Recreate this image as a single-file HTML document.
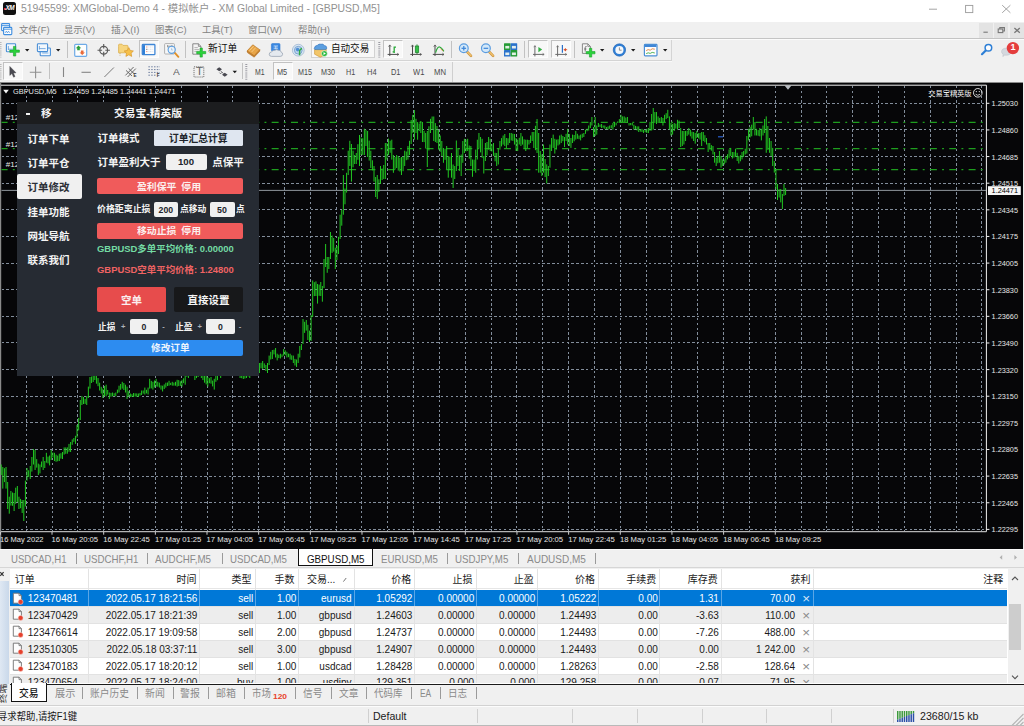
<!DOCTYPE html>
<html lang="zh-CN"><head><meta charset="utf-8"><title>MT4</title>
<style>
*{box-sizing:border-box;margin:0;padding:0}
html,body{width:1024px;height:726px;overflow:hidden;background:#f0f0f0}
body{position:relative;font-family:"Liberation Sans","Noto Sans CJK SC",sans-serif;font-size:10px;color:#222}
.a{position:absolute;white-space:nowrap}
.t{position:absolute;white-space:nowrap;line-height:1;transform-origin:0 50%}
#titlebar{left:0;top:0;width:1024px;height:22px;background:#fff}
#menubar{left:0;top:22px;width:1024px;height:16px;background:#f0f0f0}
.menu{color:#828282;font-size:9.5px;top:25px}
.sep{position:absolute;width:1px;background:#c2c2c2}
.pressed{position:absolute;background:#f8f8f8;border:1px solid #c2c2c2;border-right-color:#fdfdfd;border-bottom-color:#fdfdfd}
.tf{font-size:8.3px;color:#4a4a4a;top:67.8px}
</style></head>
<body>
<div id="titlebar" class="a"></div>
<div class="a" style="left:3.2px;top:2.3px;width:12.9px;height:12.4px;background:#111;border-radius:2.5px"></div>
<div class="a" style="left:4.4px;top:7.6px;width:1.6px;height:2.2px;background:#e0302a"></div><div class="t" style="left:5.6px;top:5.2px;font-size:6.4px;font-weight:bold;font-style:italic;color:#fff;letter-spacing:-0.5px">XM</div>
<div class="t" style="transform:scaleX(1.0096);left:20.5px;top:3.9px;font-size:10.3px;color:#929292">51945599: XMGlobal-Demo 4 - 模拟帐户 - XM Global Limited - [GBPUSD,M5]</div>
<svg class="a" style="left:920px;top:0" width="104" height="22" viewBox="920 0 104 22"><g stroke="#9a9a9a" stroke-width="0.9" fill="none"><path d="M929 9.2H937"/><rect x="965.6" y="5.4" width="7.2" height="7.2"/><path d="M1002.2 5.2L1010.4 12.8M1010.4 5.2L1002.2 12.8"/></g></svg>
<div id="menubar" class="a"></div>
<svg class="a" style="left:0;top:22px" width="14" height="16" viewBox="0 22 14 16"><g fill="#fdfdfd" stroke="#3f8ee0" stroke-width="1.1"><rect x="1.6" y="23.6" width="8" height="7" rx="0.8"/><rect x="3.6" y="27.4" width="8.2" height="7.2" rx="0.8"/></g><path d="M1.6 25.6H9.6M3.6 29.2H11.8" stroke="#3f8ee0" stroke-width="0.9"/><path d="M5.2 32.8l1.1-1.6 1.1 1.6 1.1-1.6 1.1 1.6" stroke="#3f8ee0" stroke-width="0.8" fill="none"/></svg>
<div class="t menu" style="transform:scaleX(0.9794);left:19.2px">文件(F)</div>
<div class="t menu" style="transform:scaleX(0.9788);left:64.3px">显示(V)</div>
<div class="t menu" style="transform:scaleX(1.0190);left:111px">插入(I)</div>
<div class="t menu" style="transform:scaleX(0.9782);left:155px">图表(C)</div>
<div class="t menu" style="transform:scaleX(0.9794);left:201.5px">工具(T)</div>
<div class="t menu" style="transform:scaleX(0.9913);left:248px">窗口(W)</div>
<div class="t menu" style="transform:scaleX(0.9937);left:297.5px">帮助(H)</div>
<div class="a" style="left:979px;top:22.5px;width:13.6px;height:15.2px;background:#e3e3e3"></div>
<div class="a" style="left:994px;top:22.5px;width:14px;height:15.2px;background:#e3e3e3"></div>
<div class="a" style="left:1010px;top:22.5px;width:14px;height:15.2px;background:#e3e3e3"></div>
<svg class="a" style="left:976px;top:22px" width="48" height="16" viewBox="976 22 48 16"><g stroke="#777" stroke-width="1.1" fill="none"><path d="M983.4 32.2H987.8"/><rect x="998.2" y="29" width="4.6" height="3.6"/><path d="M999.8 29V27.6H1004.4V31H1002.8"/><path d="M1014.4 28L1019.8 32.8M1019.8 28L1014.4 32.8" stroke-width="1.3"/></g></svg>
<div class="a" style="left:0;top:37.8px;width:1024px;height:1px;background:#c4c4c4"></div>
<div class="a" style="left:0;top:38.8px;width:1024px;height:1px;background:#fbfbfb"></div>
<div class="pressed" style="left:138.8px;top:40.4px;width:20.5px;height:17.6px"></div>
<div class="pressed" style="left:311.3px;top:40.4px;width:63.3px;height:17.6px;border-color:#d2d2d2"></div>
<div class="pressed" style="left:383.2px;top:40.4px;width:19.8px;height:17.6px"></div>
<div class="pressed" style="left:528.3px;top:40.4px;width:19.6px;height:17.6px"></div>
<div class="pressed" style="left:551.2px;top:40.4px;width:20.1px;height:17.6px"></div>
<div class="pressed" style="left:3px;top:62.4px;width:20.4px;height:17.6px"></div>
<div class="pressed" style="left:272.5px;top:62.4px;width:20.5px;height:17.6px"></div>
<div class="sep" style="left:66.9px;top:41.4px;height:16.2px"></div>
<div class="sep" style="left:184.7px;top:41.4px;height:16.2px"></div>
<div class="sep" style="left:451.3px;top:41.4px;height:16.2px"></div>
<div class="sep" style="left:524.1px;top:41.4px;height:16.2px"></div>
<div class="sep" style="left:573.9px;top:41.4px;height:16.2px"></div>
<div class="sep" style="left:48.8px;top:63.3px;height:16.2px"></div>
<div class="sep" style="left:242.3px;top:63.3px;height:16.2px"></div>
<div class="a" style="left:0;top:59.6px;width:672.4px;height:1px;background:#d4d4d4"></div>
<div class="a" style="left:0;top:60.6px;width:672.4px;height:1px;background:#f9f9f9"></div>
<div class="a" style="left:671.4px;top:40px;width:1px;height:20px;background:#d4d4d4"></div>
<div class="a" style="left:451.8px;top:61.5px;width:1px;height:20.5px;background:#cfcfcf"></div>
<svg class="a" style="left:0;top:39px" width="1024" height="44" viewBox="0 39 1024 44">
<path d="M0.8 42V57.5" stroke="#b4b4b4" stroke-width="1.4" stroke-dasharray="1 1.1"/>
<path d="M0.8 64V80" stroke="#b4b4b4" stroke-width="1.4" stroke-dasharray="1 1.1"/>
<path d="M379.3 42V57.5" stroke="#9c9ca4" stroke-width="2" stroke-dasharray="1 1.1"/>
<path d="M246.3 64V80" stroke="#9c9ca4" stroke-width="2" stroke-dasharray="1 1.1"/>
<rect x="6.4" y="43.8" width="9.2" height="8" rx="0.8" fill="#f2f7fc" stroke="#4a8fd6" stroke-width="1.1"/><path d="M8.4 46V50M8.4 49.2H13" stroke="#4a8fd6" stroke-width="0.7" fill="none"/>
<path d="M13.45 46.400000000000006h2.3v3.65h3.65v2.3h-3.65v3.65h-2.3v-3.65h-3.65v-2.3h3.65z" fill="#2ad43a" stroke="#17a02a" stroke-width="0.6" stroke-linejoin="round"/>
<path d="M25 49.1h4.4l-2.2 2.5z" fill="#1a1a1a"/>
<rect x="40.2" y="48" width="10.2" height="7.8" rx="0.8" fill="#f2f7fc" stroke="#4a8fd6" stroke-width="1.1"/><path d="M42.2 53H48.4" stroke="#4a8fd6" stroke-width="0.7" fill="none"/>
<rect x="37.4" y="43.8" width="10.2" height="7.8" rx="0.8" fill="#f2f7fc" stroke="#4a8fd6" stroke-width="1.1"/><path d="M39.4 46V49.6M39.4 48.6H45.6" stroke="#4a8fd6" stroke-width="0.7" fill="none"/>
<path d="M56 49.1h4.4l-2.2 2.5z" fill="#1a1a1a"/>
<rect x="74.7" y="44.3" width="12" height="12" rx="1" fill="#fdfdfd" stroke="#6eaae6" stroke-width="1.2"/>
<path d="M78.5 45.6l2.7 2.6h-1.4v2h-2.6v-2h-1.4z" fill="#2a9e3a"/><path d="M82.2 55l-2.7-2.6h1.4v-2h2.6v2h1.4z" fill="#ea6b3a"/>
<g stroke="#5a5a5a" fill="none"><circle cx="103.7" cy="50.2" r="3.9" stroke-width="1.2"/><path d="M103.7 44V48.6M103.7 51.8V56.4M97.5 50.2H102.1M105.3 50.2H109.9" stroke-width="1.1"/></g>
<path d="M118.6 46.4V45q0-0.8 0.8-0.8h2.6l1 1.2h4.2q0.8 0 0.8 0.8v6.6h-9.4z" fill="#f7d57e" stroke="#d9a93e" stroke-width="0.7"/>
<path d="M120 53v2.6" stroke="#c9a050" stroke-width="0.8" stroke-dasharray="1 0.8"/>
<path d="M128.8 47.6l1.5 2.9 3.1 0.5-2.3 2.2 0.6 3.2-2.9-1.6-2.9 1.6 0.6-3.2-2.3-2.2 3.1-0.5z" fill="#f6c04a" stroke="#d9962a" stroke-width="0.7"/>
<rect x="142.3" y="44.5" width="12.6" height="10.2" rx="0.8" fill="#fdfdfd" stroke="#3f86d6" stroke-width="1.3"/><rect x="142.8" y="45.1" width="2.2" height="9" fill="#2f7fd6"/>
<path d="M146.4 47h0.9M146.4 51.6h0.9" stroke="#e0553a" stroke-width="0.9"/><path d="M146.4 49.3h0.9" stroke="#333" stroke-width="0.9"/><path d="M148.4 47h5M148.4 49.3h5M148.4 51.6h5" stroke="#c4d4e6" stroke-width="0.6" stroke-dasharray="1 0.6"/>
<rect x="164.6" y="43.6" width="9.8" height="10.4" rx="0.8" fill="#f7f7f7" stroke="#a9a9a9" stroke-width="0.9"/><path d="M167.6 45v2.4M172 45v2.4M167.6 46.2h4.4" stroke="#777" stroke-width="0.7" fill="none"/>
<path d="M174.6 52.6L178.4 56.8" stroke="#e0912a" stroke-width="1.9" stroke-linecap="round"/><circle cx="171.7" cy="49.8" r="3.6" fill="#eaf3fb" fill-opacity="0.8" stroke="#5a9ee0" stroke-width="1.1"/><path d="M171.6 48.2V50H172.8" stroke="#8aa8c8" stroke-width="0.6" fill="none"/>
<path d="M192.8 43.8h5.6l2.6 2.6v7.8h-8.2z" fill="#f4f4f4" stroke="#7d7d7d" stroke-width="0.9"/><path d="M198.4 43.8v2.6h2.6" fill="none" stroke="#7d7d7d" stroke-width="0.8"/><path d="M194.4 47.6h3.4M194.4 49.6h4.8M194.4 51.6h2.4" stroke="#9a9a9a" stroke-width="0.7"/>
<path d="M200.04999999999998 48.1h2.3v3.35h3.35v2.3h-3.35v3.35h-2.3v-3.35h-3.35v-2.3h3.35z" fill="#2ad43a" stroke="#17a02a" stroke-width="0.6" stroke-linejoin="round"/>
<path d="M247 51l5.8-6.2 7 5-5.6 6z" fill="#e8a548" stroke="#b87422" stroke-width="0.7"/><path d="M247 51l0.6 1.8 6.6 4.4 5.6-6v-1.4l-5.6 6z" fill="#c98432" stroke="#b06c1c" stroke-width="0.5"/><path d="M249.4 50.6l4.2-4.4M251.6 52l4.2-4.4" stroke="#f6cf8a" stroke-width="0.9"/>
<rect x="271.4" y="43.6" width="8.6" height="7.4" rx="1" fill="#3a88e2" stroke="#2f78d0" stroke-width="0.6"/><path d="M273.6 46h4.4M273.6 48.2h4.4M275.8 46v3" stroke="#d8e8fa" stroke-width="0.8"/>
<path d="M271.6 56.4q-2.4 0-2.4-2.2q0-2 2.4-2.2q1-2.2 3.4-1.8q1.4-1.2 3.2 0q2.8-0.2 3 2q1.6 0.4 1.4 2.2q-0.2 2-2.4 2z" fill="#e4e9ef" stroke="#9aa5b2" stroke-width="0.8"/>
<circle cx="298.3" cy="50.2" r="5.9" fill="#dbe7f3" stroke="#9db6d0" stroke-width="0.8"/><circle cx="298.3" cy="50.2" r="3.9" fill="#b9d2ea" stroke="#6f9ccc" stroke-width="0.8"/><circle cx="297.6" cy="49.6" r="1.8" fill="#4f8fd6"/><path d="M299.6 55.2V50.4q1.8-0.8 1.8-2.4" stroke="#2fa845" stroke-width="1.5" fill="none"/>
<path d="M314.6 49.6l5.6-3 6 2.6v5.4l-6 2.6-5.6-3z" fill="#f3c66a" stroke="#c9912a" stroke-width="0.6"/><path d="M314.2 48.8q0.4-3.4 3.4-3.6q1.2-1.6 3.4-1q2.2-0.6 3.2 1.2q2.6 0.2 2.6 2.6q0 1.4-1.6 1.6h-9.2q-1.8 0-1.8-0.8z" fill="#5c9fe0" stroke="#2f6fb8" stroke-width="0.6"/>
<circle cx="324.4" cy="53.6" r="2.9" fill="#25b83a" stroke="#e9f8ea" stroke-width="0.6"/><path d="M323.5 52.1l2.4 1.5-2.4 1.5z" fill="#fff"/>
<path d="M389.8 45.2V56.0M387.6 54.4H398.6" stroke="#4a4a4a" stroke-width="1" fill="none"/><path d="M388.5 46.7L389.8 44.900000000000006L391.1 46.7M397.2 53.199999999999996L398.8 54.4L397.2 55.6" stroke="#4a4a4a" stroke-width="0.7" fill="none"/>
<path d="M394.2 46.4V53M394.2 47.2H396M392.6 51.8H394.2" stroke="#2aa83a" stroke-width="1.3" fill="none"/>
<path d="M412.5 45.2V56.0M410.3 54.4H421.3" stroke="#4a4a4a" stroke-width="1" fill="none"/><path d="M411.2 46.7L412.5 44.900000000000006L413.8 46.7M419.9 53.199999999999996L421.5 54.4L419.9 55.6" stroke="#4a4a4a" stroke-width="0.7" fill="none"/>
<path d="M417 44.4V54" stroke="#1d7f2b" stroke-width="0.9"/><rect x="415.3" y="46" width="3.4" height="6.4" fill="#35c048" stroke="#1d7f2b" stroke-width="0.7"/>
<path d="M435 45.2V56.0M432.8 54.4H443.8" stroke="#4a4a4a" stroke-width="1" fill="none"/><path d="M433.7 46.7L435 44.900000000000006L436.3 46.7M442.4 53.199999999999996L444 54.4L442.4 55.6" stroke="#4a4a4a" stroke-width="0.7" fill="none"/>
<path d="M435.6 52.6Q437.4 46.6 439.6 47Q441.6 47.4 443.8 51.4" stroke="#2aa83a" stroke-width="1.2" fill="none"/><path d="M440.6 48.6l2.4 2.6" stroke="#e08a3a" stroke-width="0.8"/>
<path d="M467.2 51.8L471.0 55.8" stroke="#c98f3a" stroke-width="2.6" stroke-linecap="round"/><path d="M467.2 51.8L471.0 55.8" stroke="#eebf6c" stroke-width="1.5" stroke-linecap="round"/><circle cx="463.8" cy="48.3" r="4.4" fill="#d3e8f9" stroke="#5a9ce0" stroke-width="1.2"/>
<path d="M461.5 48.3H466.1" stroke="#3a84d8" stroke-width="1.2"/>
<path d="M463.8 46V50.6" stroke="#3a84d8" stroke-width="1.2"/>
<path d="M489.29999999999995 51.8L493.09999999999997 55.8" stroke="#c98f3a" stroke-width="2.6" stroke-linecap="round"/><path d="M489.29999999999995 51.8L493.09999999999997 55.8" stroke="#eebf6c" stroke-width="1.5" stroke-linecap="round"/><circle cx="485.9" cy="48.3" r="4.4" fill="#d3e8f9" stroke="#5a9ce0" stroke-width="1.2"/>
<path d="M483.59999999999997 48.3H488.2" stroke="#3a84d8" stroke-width="1.2"/>
<rect x="504" y="43.3" width="6.6" height="6.6" rx="0.5" fill="#259a35"/><rect x="505.3" y="45.9" width="4" height="2.6" fill="#f2f8f2" fill-opacity="0.92"/>
<rect x="510.6" y="43.3" width="6.6" height="6.6" rx="0.5" fill="#2a72cc"/><rect x="511.90000000000003" y="45.9" width="4" height="2.6" fill="#f2f8f2" fill-opacity="0.92"/>
<rect x="504" y="49.9" width="6.6" height="6.6" rx="0.5" fill="#2a72cc"/><rect x="505.3" y="52.5" width="4" height="2.6" fill="#f2f8f2" fill-opacity="0.92"/>
<rect x="510.6" y="49.9" width="6.6" height="6.6" rx="0.5" fill="#259a35"/><rect x="511.90000000000003" y="52.5" width="4" height="2.6" fill="#f2f8f2" fill-opacity="0.92"/>
<path d="M534.9 45.8V56.4M533 54.4H544" stroke="#6a6a6a" stroke-width="1" fill="none"/><path d="M533.8 47.2L534.9 45.6L536 47.2M542.6 53.3L544.2 54.4L542.6 55.5" stroke="#6a6a6a" stroke-width="0.7" fill="none"/><path d="M538.4 46.9L542.2 49.6L538.4 52.3Z" fill="#35b045"/>
<path d="M557.6 45.8V56.4M555.3 54.4H566.8" stroke="#6a6a6a" stroke-width="1" fill="none"/><path d="M556.5 47.2L557.6 45.6L558.7 47.2M565.2 53.3L566.8 54.4L565.2 55.5" stroke="#6a6a6a" stroke-width="0.7" fill="none"/><path d="M562.4 45V52.8" stroke="#2a70c8" stroke-width="1.2"/><path d="M563.4 49.7L566 47.9V51.5Z" fill="#d9502a"/><path d="M565.6 49.7H567.2" stroke="#d9502a" stroke-width="0.9"/>
<path d="M582.4 43.8h5.4l2.6 2.6v7h-8z" fill="#f4f4f4" stroke="#7d7d7d" stroke-width="0.9"/><path d="M587.8 43.8v2.6h2.6" fill="none" stroke="#7d7d7d" stroke-width="0.8"/><path d="M586.6 46.6q-1.4-0.4-1.4 1v4M584.2 49h2.2" stroke="#555" stroke-width="0.8" fill="none"/>
<path d="M589.45 48.300000000000004h2.3v3.2500000000000004h3.2500000000000004v2.3h-3.2500000000000004v3.2500000000000004h-2.3v-3.2500000000000004h-3.2500000000000004v-2.3h3.2500000000000004z" fill="#2ad43a" stroke="#17a02a" stroke-width="0.6" stroke-linejoin="round"/>
<path d="M600 49.1h4.4l-2.2 2.5z" fill="#1a1a1a"/>
<circle cx="619.4" cy="50" r="6.2" fill="#2f7fd6" stroke="#1f5fae" stroke-width="0.6"/><circle cx="619.4" cy="50" r="4.1" fill="#f4f8fc"/><path d="M619.4 47.4V50.2H621.6" stroke="#777" stroke-width="0.8" fill="none"/>
<path d="M631 49.1h4.4l-2.2 2.5z" fill="#1a1a1a"/>
<rect x="644.4" y="44.4" width="12.6" height="11.4" rx="0.8" fill="#fdfdfd" stroke="#4a8fd6" stroke-width="1.2"/><rect x="645" y="45" width="11.4" height="2" fill="#3f86d6"/><path d="M646.2 50.6l2-1 2 0.6 2-1.4 2.6 0.4" stroke="#e0803a" stroke-width="0.9" fill="none"/><path d="M646.2 53.6l2-0.8 2 0.6 2-1 2.6 0.6" stroke="#3fae4a" stroke-width="0.9" fill="none"/>
<path d="M663 49.1h4.4l-2.2 2.5z" fill="#1a1a1a"/>
<path d="M986 50.2L982 54.2" stroke="#2d7fd6" stroke-width="2.2" stroke-linecap="round"/><circle cx="988.4" cy="47.7" r="3.3" fill="#fafcff" stroke="#2d7fd6" stroke-width="1.5"/>
<path d="M1001.6 51.8q0-3.6 4.6-3.6q4.6 0 4.6 3.6q0 3.4-4.6 3.4q-0.8 0-1.4-0.2l-2 1.6l0.4-2.2q-1.6-1-1.6-2.6z" fill="#d4d8de" stroke="#b4bac2" stroke-width="0.5"/>
<circle cx="1012.9" cy="48.1" r="6.2" fill="#e43d3d"/>
<path d="M9.8 66.4V75.4L11.9 73.6L13.6 77.2L15 76.5L13.4 73L16 72.8Z" fill="#4a4a52" stroke="#3a3a40" stroke-width="0.4"/>
<path d="M35.6 66.4V78.2M29.8 72.3H41.4" stroke="#909090" stroke-width="1.1" fill="none"/>
<path d="M63.5 67.2V77" stroke="#858585" stroke-width="1.1"/><path d="M81.5 72.3H90.8" stroke="#858585" stroke-width="1.1"/><path d="M104.4 77L113.9 67.5" stroke="#7a7a7a" stroke-width="1"/>
<path d="M125.4 75.4L133.6 67M127.6 77L135.8 68.6M126 70.4L132 76M128.6 68.4L134 73.6" stroke="#5a5a5a" stroke-width="0.9" fill="none"/>
<path d="M148.4 66.8H160M148.4 69.6H160M148.4 72.4H160M148.4 75.2H156" stroke="#6f7f9f" stroke-width="1" stroke-dasharray="1.5 1.3" fill="none"/>
<rect x="194" y="66.8" width="9.8" height="10.2" fill="none" stroke="#6a6a6a" stroke-width="0.9" stroke-dasharray="1.2 0.9"/>
<path d="M216.4 69.3l2.8-2 2.8 2-2.8 2z" fill="#484850"/><path d="M222 74.8l2.8-2 2.8 2-2.8 2z" fill="#484850"/><path d="M220.4 70.8l3.2 2.8M219.4 72.6l1.2 1.2 1.6-1.6" stroke="#55555c" stroke-width="0.8" fill="none"/>
<path d="M232.6 70.7h4.4l-2.2 2.5z" fill="#1a1a1a"/>
</svg>
<div class="t" style="transform:scaleX(0.9935);left:208px;top:44.3px;font-size:9.8px;color:#111">新订单</div>
<div class="t" style="transform:scaleX(0.9748);left:331px;top:44.3px;font-size:9.8px;color:#111">自动交易</div>
<div class="t" style="left:1010.6px;top:43.4px;font-size:9.2px;font-weight:bold;color:#fff">1</div>
<div class="t" style="transform:scaleX(1.0387);left:173px;top:67.2px;font-size:9.8px;color:#5e5e5e">A</div>
<div class="t" style="transform:scaleX(1.1007);left:195.5px;top:66.9px;font-size:10.4px;color:#666">T</div>
<div class="t" style="left:133.6px;top:74.2px;font-size:4.6px;font-weight:bold;color:#333">E</div>
<div class="t" style="left:156.8px;top:74.2px;font-size:4.6px;font-weight:bold;color:#333">F</div>
<div class="t tf" style="transform:scaleX(0.8325);left:254.6px">M1</div>
<div class="t tf" style="transform:scaleX(0.8846);left:277px">M5</div>
<div class="t tf" style="transform:scaleX(0.8612);left:297.9px">M15</div>
<div class="t tf" style="transform:scaleX(0.8674);left:321px">M30</div>
<div class="t tf" style="transform:scaleX(0.8672);left:345.8px">H1</div>
<div class="t tf" style="transform:scaleX(0.9049);left:367.4px">H4</div>
<div class="t tf" style="transform:scaleX(0.8954);left:390.5px">D1</div>
<div class="t tf" style="transform:scaleX(0.9154);left:412.8px">W1</div>
<div class="t tf" style="transform:scaleX(0.9298);left:434.2px">MN</div>
<svg class="chart" width="1024" height="467" viewBox="0 82 1024 467" style="position:absolute;left:0;top:82px">
<rect x="0" y="82" width="1024" height="467" fill="#f0f0f0"/>
<rect x="0" y="82" width="1023" height="1.3" fill="#8a8a8a"/>
<rect x="0" y="83" width="1023" height="466" fill="#060608"/>
<rect x="0" y="83" width="1.2" height="466" fill="#8a8a8a"/>
<path d="M26.20 86V531M52.03 86V531M77.86 86V531M103.69 86V531M129.52 86V531M155.35 86V531M181.18 86V531M207.01 86V531M232.84 86V531M258.67 86V531M284.50 86V531M310.33 86V531M336.16 86V531M361.99 86V531M387.82 86V531M413.65 86V531M439.48 86V531M465.31 86V531M491.14 86V531M516.97 86V531M542.80 86V531M568.63 86V531M594.46 86V531M620.29 86V531M646.12 86V531M671.95 86V531M697.78 86V531M723.61 86V531M749.44 86V531M775.27 86V531M801.10 86V531M826.93 86V531M852.76 86V531M878.59 86V531M904.42 86V531M930.25 86V531M956.08 86V531M981.91 86V531M1.5 103.30H986M1.5 129.93H986M1.5 156.56H986M1.5 183.19H986M1.5 209.82H986M1.5 236.45H986M1.5 263.08H986M1.5 289.71H986M1.5 316.34H986M1.5 342.97H986M1.5 369.60H986M1.5 396.23H986M1.5 422.86H986M1.5 449.49H986M1.5 476.12H986M1.5 502.75H986M1.5 529.38H986" stroke="#828d9b" stroke-width="1" stroke-dasharray="2.4 2.43" fill="none" shape-rendering="crispEdges"/>
<path d="M1 85.2H986.4V531.7" stroke="#f2f2f2" stroke-width="1" fill="none"/>
<path d="M1 531.7H986.4" stroke="#b4b4b4" stroke-width="1.2" fill="none"/>
<path d="M1.5 122.3H986" stroke="#1e9e1e" stroke-width="1.25" stroke-dasharray="7 5.2 1.9 5.26" stroke-dashoffset="0.9" fill="none"/>
<path d="M1.5 148.7H986" stroke="#1e9e1e" stroke-width="1.25" stroke-dasharray="7 5.2 1.9 5.26" stroke-dashoffset="0.9" fill="none"/>
<path d="M1.5 169.6H986" stroke="#1e9e1e" stroke-width="1.25" stroke-dasharray="7 5.2 1.9 5.26" stroke-dashoffset="0.9" fill="none"/>
<path d="M1.5 190.4H986" stroke="#8f959c" stroke-width="1" fill="none"/>
<path d="M1.20 464.5V475.0M2.81 467.0V488.6M4.43 468.2V482.1M6.04 467.0V488.6M7.66 482.0V509.0M9.27 496.7V513.7M10.88 491.0V505.6M12.50 492.5V505.8M14.11 493.0V511.0M15.73 487.7V503.8M17.34 486.0V502.0M18.95 496.7V509.0M20.57 498.9V508.2M22.18 500.0V513.0M23.80 500.0V521.0M25.41 480.6V506.5M27.02 468.0V480.6M28.64 470.3V477.0M30.25 466.0V479.0M31.87 457.0V471.6M33.48 449.0V464.5M35.09 450.0V470.0M36.71 459.1V467.6M38.32 463.6V475.0M39.94 464.5V473.4M41.55 461.5V467.2M43.16 457.0V470.0M44.78 461.0V468.0M46.39 452.8V462.7M48.01 456.6V463.4M49.62 455.5V465.4M51.23 450.0V460.0M52.85 452.5V457.5M54.46 452.8V461.0M56.08 454.6V461.8M57.69 455.6V461.3M59.30 453.7V461.0M60.92 453.2V458.6M62.53 452.0V459.0M64.15 447.4V454.6M65.76 447.4V453.8M67.37 447.4V453.7M68.99 443.9V451.8M70.60 442.0V452.0M72.22 439.4V444.8M73.83 438.0V441.8M75.44 435.8V443.9M77.06 425.0V437.6M78.67 418.0V430.4M80.29 400.0V420.0M81.90 396.0V405.0M83.51 397.0V404.0M85.13 398.9V403.9M86.74 396.0V405.0M88.36 386.6V398.0M89.97 377.0V388.6M91.58 376.5V383.0M93.20 371.0V382.0M94.81 368.0V380.0M96.43 370.0V383.7M98.04 378.0V386.2M99.65 382.7V390.5M101.27 386.8V393.5M102.88 388.6V398.0M104.50 386.0V396.0M106.11 384.7V396.4M107.72 390.0V394.6M109.34 392.5V399.0M110.95 392.9V396.8M112.57 392.5V396.4M114.18 393.3V395.8M115.79 392.5V396.4M117.41 389.6V393.3M119.02 385.7V392.5M120.64 384.0V389.8M122.25 381.8V388.6M123.86 383.0V390.0M125.48 384.7V392.5M127.09 386.6V399.0M128.71 391.2V396.7M130.32 393.5V397.0M131.93 394.2V396.9M133.55 393.0V397.0M135.16 393.3V396.5M136.78 393.4V396.8M138.39 393.5V397.0M140.00 392.9V395.7M141.62 390.5V395.0M143.23 390.5V393.6M144.85 387.6V394.5M146.46 389.8V393.4M148.07 387.6V394.5M149.69 378.8V388.6M151.30 380.9V388.4M152.92 381.8V389.6M154.53 380.5V387.5M156.14 378.8V386.6M157.76 381.8V386.7M159.37 382.7V387.6M160.99 385.4V389.6M162.60 385.7V391.5M164.21 384.4V389.1M165.83 382.7V387.6M167.44 382.5V386.0M169.06 380.8V385.7M170.67 382.8V385.1M172.28 381.8V385.7M173.90 382.6V385.7M175.51 381.8V385.7M177.13 379.8V386.6M178.74 380.1V386.0M180.35 381.3V385.9M181.97 379.8V386.6M183.58 378.3V383.1M185.20 373.0V384.7M186.81 370.5V376.7M188.42 368.0V378.0M190.04 370.3V375.5M191.65 366.0V376.0M193.27 369.4V374.9M194.88 370.0V380.0M196.49 371.0V378.1M198.11 366.0V377.0M199.72 369.3V374.9M201.34 368.0V378.0M202.95 372.4V380.1M204.56 372.0V382.7M206.18 375.5V384.4M207.79 377.0V386.6M209.41 378.2V383.2M211.02 377.0V383.7M212.63 380.6V386.4M214.25 378.8V389.6M215.86 373.0V381.8M217.48 371.7V380.2M219.09 370.2V375.9M220.70 368.0V378.0M222.32 367.6V373.6M223.93 364.0V374.0M225.55 365.4V373.0M227.16 367.7V372.7M228.77 366.0V376.0M230.39 365.5V372.2M232.00 362.0V372.0M233.62 363.7V373.0M235.23 365.0V375.0M236.84 367.3V374.6M238.46 366.9V375.0M240.07 368.0V378.0M241.69 369.6V378.2M243.30 370.0V379.0M244.91 371.0V378.5M246.53 371.0V378.0M248.14 371.4V376.5M249.76 370.0V378.0M251.37 366.0V376.0M252.98 368.2V373.7M254.60 364.0V374.0M256.21 363.6V368.9M257.83 362.0V372.0M259.44 363.0V373.0M261.05 362.8V368.3M262.67 361.0V369.0M264.28 363.4V367.9M265.90 365.0V371.0M267.51 363.0V373.0M269.12 355.6V365.0M270.74 351.8V359.5M272.35 350.0V359.0M273.97 349.7V354.4M275.58 348.0V357.5M277.19 353.7V360.4M278.81 354.7V358.1M280.42 353.7V358.5M282.04 354.4V357.2M283.65 349.0V355.6M285.26 350.4V355.2M286.88 351.8V357.5M288.49 353.6V357.2M290.11 353.7V359.5M291.72 355.3V359.9M293.33 355.6V363.0M294.95 358.9V365.5M296.56 359.5V367.0M298.18 353.7V363.0M299.79 346.0V357.5M301.40 344.0V350.0M303.02 319.0V344.0M304.63 321.8V332.9M306.25 320.0V330.6M307.86 324.8V340.0M309.47 330.6V342.0M311.09 315.0V341.0M312.70 280.5V317.0M314.32 282.2V296.1M315.93 281.4V296.0M317.54 284.0V303.6M319.16 284.6V295.8M320.77 282.0V296.0M322.39 286.0V301.7M324.00 259.0V288.0M325.61 244.0V267.0M327.23 257.0V272.8M328.84 257.0V269.0M330.46 232.0V259.0M332.07 235.6V252.9M333.68 238.0V251.6M335.30 247.7V269.0M336.91 246.0V260.0M338.53 236.8V254.0M340.14 214.7V239.0M341.75 210.0V225.7M343.37 175.0V214.7M344.98 188.5V204.3M346.60 172.8V192.6M348.21 150.7V175.0M349.82 140.8V166.0M351.44 144.0V181.6M353.05 150.7V167.3M354.67 155.0V164.0M356.28 153.0V164.0M357.89 144.2V159.8M359.51 135.0V166.0M361.12 137.5V155.0M362.74 138.3V154.9M364.35 128.7V155.0M365.96 129.8V146.0M367.58 131.0V157.0M369.19 140.6V160.6M370.81 150.7V168.0M372.42 160.3V170.4M374.03 166.0V181.6M375.65 177.0V197.0M377.26 175.0V199.0M378.88 179.3V191.9M380.49 166.0V183.8M382.10 168.5V180.0M383.72 165.0V179.0M385.33 143.0V179.0M386.95 143.0V159.6M388.56 138.6V155.0M390.17 140.7V152.8M391.79 139.7V159.6M393.40 155.0V172.8M395.02 156.9V169.5M396.63 155.0V168.0M398.24 156.0V170.6M399.86 157.7V171.5M401.47 157.0V175.0M403.09 156.4V171.2M404.70 150.7V166.0M406.31 151.5V160.2M407.93 146.0V159.6M409.54 140.8V155.0M411.16 120.0V144.0M412.77 114.9V132.8M414.38 110.0V139.7M416.00 118.8V133.0M417.61 122.0V139.7M419.23 123.5V131.1M420.84 121.0V133.0M422.45 122.0V142.0M424.07 130.8V142.1M425.68 133.0V148.5M427.30 131.0V167.0M428.91 126.3V150.5M430.52 118.8V133.0M432.14 116.5V129.8M433.75 116.5V141.0M435.37 123.1V142.0M436.98 126.0V143.0M438.59 129.8V149.6M440.21 135.5V151.8M441.82 141.0V156.0M443.44 148.0V162.8M445.05 148.8V159.8M446.66 146.0V169.0M448.28 156.0V177.7M449.89 156.6V170.2M451.51 153.0V177.7M453.12 164.5V188.0M454.73 166.0V179.0M456.35 140.5V171.0M457.96 148.0V166.0M459.58 155.4V170.9M461.19 154.5V176.0M462.80 141.0V162.8M464.42 138.8V153.0M466.03 139.6V151.4M467.65 138.8V151.0M469.26 145.5V158.7M470.87 146.0V166.0M472.49 159.5V176.8M474.10 159.7V171.0M475.72 149.6V172.7M477.33 139.7V159.5M478.94 133.0V148.0M480.56 137.0V152.4M482.17 138.8V157.8M483.79 156.0V173.5M485.40 143.0V161.0M487.01 142.0V155.4M488.63 137.0V149.6M490.24 138.8V151.0M491.86 144.3V151.5M493.47 143.0V156.0M495.08 152.8V161.3M496.70 153.0V166.0M498.31 148.0V164.5M499.93 141.0V149.6M501.54 138.1V146.4M503.15 135.5V144.6M504.77 134.0V146.0M506.38 138.0V148.0M508.00 138.3V145.1M509.61 133.0V143.0M511.22 133.0V140.5M512.84 133.7V140.9M514.45 134.0V144.6M516.07 138.0V151.0M517.68 139.7V151.0M519.29 137.8V144.5M520.91 133.0V146.0M522.52 136.4V144.6M524.14 139.3V148.6M525.75 139.7V151.0M527.36 139.7V148.0M528.98 140.0V144.5M530.59 135.5V143.0M532.21 132.0V141.0M533.82 132.0V148.0M535.43 125.8V150.2M537.05 119.0V153.0M538.66 133.0V172.7M540.28 151.0V172.7M541.89 154.5V176.0M543.50 144.5V172.6M545.12 159.0V177.0M546.73 164.4V183.4M548.35 166.0V176.0M549.96 144.5V167.7M551.57 138.0V151.0M553.19 134.6V147.9M554.80 138.8V153.6M556.42 139.6V149.5M558.03 139.3V145.5M559.64 135.5V144.5M561.26 134.6V143.0M562.87 136.0V141.2M564.49 137.0V147.0M566.10 133.8V141.0M567.71 128.8V144.5M569.33 134.0V146.0M570.94 138.0V147.9M572.56 134.6V143.0M574.17 135.0V141.3M575.78 131.0V139.6M577.40 133.8V138.8M579.01 135.5V139.2M580.63 134.6V140.4M582.24 133.7V137.8M583.85 133.0V137.0M585.47 129.7V133.8M587.08 128.6V131.3M588.70 125.5V130.5M590.31 122.0V128.0M591.92 117.0V125.5M593.54 127.0V137.0M595.15 117.0V136.0M596.77 125.5V134.6M598.38 123.0V127.0M599.99 124.5V126.9M601.61 124.0V128.0M603.22 125.5V127.7M604.84 125.5V128.8M606.45 127.0V129.2M608.06 126.4V129.7M609.68 125.5V128.8M611.29 125.2V128.3M612.91 123.0V129.7M614.52 122.0V127.0M616.13 122.6V125.4M617.75 121.4V123.0M619.36 119.1V122.9M620.98 114.8V123.0M622.59 116.4V122.0M624.20 116.4V122.0M625.82 117.5V121.7M627.43 117.0V123.0M629.05 123.0V125.5M630.66 123.0V125.2M632.27 123.0V125.5M633.89 124.7V129.7M635.50 125.9V129.0M637.12 126.4V130.5M638.73 126.4V132.0M640.34 129.4V131.6M641.96 128.8V132.0M643.57 129.7V133.0M645.19 130.0V132.2M646.80 128.8V133.0M648.41 128.0V133.0M650.03 121.9V130.9M651.64 114.0V130.5M653.26 108.0V129.7M654.87 112.0V123.0M656.48 112.0V124.0M658.10 116.4V123.0M659.71 117.9V121.9M661.33 117.0V123.0M662.94 118.0V125.5M664.55 114.8V122.0M666.17 113.2V119.1M667.78 109.8V118.0M669.40 116.4V129.7M671.01 123.0V135.5M672.62 124.0V134.6M674.24 123.0V131.0M675.85 123.7V128.6M677.47 119.8V129.7M679.08 120.6V128.0M680.69 128.0V147.0M682.31 131.0V146.0M683.92 131.0V144.5M685.54 131.0V141.0M687.15 130.7V135.9M688.76 128.0V134.6M690.38 129.7V136.3M691.99 131.7V138.6M693.61 132.0V141.0M695.22 133.0V143.7M696.83 131.0V138.0M698.45 133.2V138.3M700.06 133.0V139.6M701.68 132.0V146.0M703.29 132.0V141.0M704.90 135.2V142.3M706.52 138.0V144.5M708.13 143.0V152.0M709.75 143.0V149.5M711.36 145.1V150.7M712.97 146.0V154.5M714.59 152.0V162.7M716.20 157.8V166.0M717.82 155.9V163.3M719.43 151.0V162.7M721.04 156.0V167.7M722.66 159.4V166.0M724.27 159.4V164.4M725.89 156.0V162.7M727.50 154.2V159.4M729.11 149.5V157.8M730.73 147.9V156.0M732.34 152.0V158.6M733.96 152.1V157.5M735.57 148.7V157.0M737.18 152.8V161.0M738.80 156.0V163.5M740.41 155.2V161.3M742.03 152.0V159.4M743.64 151.0V157.0M745.25 148.7V154.5M746.87 136.0V153.6M748.48 128.8V140.4M750.10 126.8V137.5M751.71 124.7V136.3M753.32 117.0V129.7M754.94 122.0V135.5M756.55 128.8V135.5M758.17 130.1V135.8M759.78 128.0V136.3M761.39 128.8V140.4M763.01 125.5V135.5M764.62 119.0V133.0M766.24 116.4V152.8M767.85 126.0V149.9M769.46 138.0V152.8M771.08 141.0V156.0M772.69 147.9V166.0M774.31 161.0V172.6M775.92 169.0V189.0M777.53 184.0V200.0M779.15 189.3V197.5M780.76 189.0V202.4M782.38 194.0V209.0M783.99 184.0V195.8M785.60 188.0V195.0" stroke="#22c922" stroke-width="1.0" fill="none"/>
<path d="M718 136.8H723" stroke="#2a5fd0" stroke-width="1.2"/>
<path d="M784.5 85.5H791.5L788 89.8Z" fill="#b8bcc2"/>
<path d="M986.4 103.30h3M986.4 129.93h3M986.4 156.56h3M986.4 183.19h3M986.4 209.82h3M986.4 236.45h3M986.4 263.08h3M986.4 289.71h3M986.4 316.34h3M986.4 342.97h3M986.4 369.60h3M986.4 396.23h3M986.4 422.86h3M986.4 449.49h3M986.4 476.12h3M986.4 502.75h3M986.4 529.38h3" stroke="#f2f2f2" stroke-width="1" fill="none"/>
<path d="M0.37 531.7v3M52.03 531.7v3M103.69 531.7v3M155.35 531.7v3M207.01 531.7v3M258.67 531.7v3M310.33 531.7v3M361.99 531.7v3M413.65 531.7v3M465.31 531.7v3M516.97 531.7v3M568.63 531.7v3M620.29 531.7v3M671.95 531.7v3M723.61 531.7v3M775.27 531.7v3" stroke="#d0d0d0" stroke-width="1" fill="none"/>
<text x="991.6" y="106.2" font-family="Liberation Sans, sans-serif" font-size="8.1" fill="#e6e6e6" textLength="26.4" lengthAdjust="spacingAndGlyphs">1.25030</text>
<text x="991.6" y="132.8" font-family="Liberation Sans, sans-serif" font-size="8.1" fill="#e6e6e6" textLength="26.4" lengthAdjust="spacingAndGlyphs">1.24860</text>
<text x="991.6" y="159.5" font-family="Liberation Sans, sans-serif" font-size="8.1" fill="#e6e6e6" textLength="26.4" lengthAdjust="spacingAndGlyphs">1.24685</text>
<text x="991.6" y="186.1" font-family="Liberation Sans, sans-serif" font-size="8.1" fill="#e6e6e6" textLength="26.4" lengthAdjust="spacingAndGlyphs">1.24515</text>
<text x="991.6" y="212.7" font-family="Liberation Sans, sans-serif" font-size="8.1" fill="#e6e6e6" textLength="26.4" lengthAdjust="spacingAndGlyphs">1.24345</text>
<text x="991.6" y="239.3" font-family="Liberation Sans, sans-serif" font-size="8.1" fill="#e6e6e6" textLength="26.4" lengthAdjust="spacingAndGlyphs">1.24175</text>
<text x="991.6" y="266.0" font-family="Liberation Sans, sans-serif" font-size="8.1" fill="#e6e6e6" textLength="26.4" lengthAdjust="spacingAndGlyphs">1.24005</text>
<text x="991.6" y="292.6" font-family="Liberation Sans, sans-serif" font-size="8.1" fill="#e6e6e6" textLength="26.4" lengthAdjust="spacingAndGlyphs">1.23830</text>
<text x="991.6" y="319.2" font-family="Liberation Sans, sans-serif" font-size="8.1" fill="#e6e6e6" textLength="26.4" lengthAdjust="spacingAndGlyphs">1.23660</text>
<text x="991.6" y="345.9" font-family="Liberation Sans, sans-serif" font-size="8.1" fill="#e6e6e6" textLength="26.4" lengthAdjust="spacingAndGlyphs">1.23490</text>
<text x="991.6" y="372.5" font-family="Liberation Sans, sans-serif" font-size="8.1" fill="#e6e6e6" textLength="26.4" lengthAdjust="spacingAndGlyphs">1.23320</text>
<text x="991.6" y="399.1" font-family="Liberation Sans, sans-serif" font-size="8.1" fill="#e6e6e6" textLength="26.4" lengthAdjust="spacingAndGlyphs">1.23150</text>
<text x="991.6" y="425.8" font-family="Liberation Sans, sans-serif" font-size="8.1" fill="#e6e6e6" textLength="26.4" lengthAdjust="spacingAndGlyphs">1.22975</text>
<text x="991.6" y="452.4" font-family="Liberation Sans, sans-serif" font-size="8.1" fill="#e6e6e6" textLength="26.4" lengthAdjust="spacingAndGlyphs">1.22805</text>
<text x="991.6" y="479.0" font-family="Liberation Sans, sans-serif" font-size="8.1" fill="#e6e6e6" textLength="26.4" lengthAdjust="spacingAndGlyphs">1.22635</text>
<text x="991.6" y="505.6" font-family="Liberation Sans, sans-serif" font-size="8.1" fill="#e6e6e6" textLength="26.4" lengthAdjust="spacingAndGlyphs">1.22465</text>
<text x="991.6" y="532.3" font-family="Liberation Sans, sans-serif" font-size="8.1" fill="#e6e6e6" textLength="26.4" lengthAdjust="spacingAndGlyphs">1.22295</text>
<rect x="988" y="186.2" width="32.8" height="8.8" fill="#f6f6f6"/>
<text x="991.6" y="193.4" font-family="Liberation Sans, sans-serif" font-size="8.1" fill="#000" textLength="26.4" lengthAdjust="spacingAndGlyphs">1.24471</text>
<text x="-0.0" y="541.7" font-family="Liberation Sans, sans-serif" font-size="8.1" fill="#e6e6e6" textLength="43.5" lengthAdjust="spacingAndGlyphs">16 May 2022</text>
<text x="51.6" y="541.7" font-family="Liberation Sans, sans-serif" font-size="8.1" fill="#e6e6e6" textLength="46.5" lengthAdjust="spacingAndGlyphs">16 May 20:05</text>
<text x="103.3" y="541.7" font-family="Liberation Sans, sans-serif" font-size="8.1" fill="#e6e6e6" textLength="46.5" lengthAdjust="spacingAndGlyphs">16 May 22:45</text>
<text x="154.9" y="541.7" font-family="Liberation Sans, sans-serif" font-size="8.1" fill="#e6e6e6" textLength="46.5" lengthAdjust="spacingAndGlyphs">17 May 01:25</text>
<text x="206.6" y="541.7" font-family="Liberation Sans, sans-serif" font-size="8.1" fill="#e6e6e6" textLength="46.5" lengthAdjust="spacingAndGlyphs">17 May 04:05</text>
<text x="258.3" y="541.7" font-family="Liberation Sans, sans-serif" font-size="8.1" fill="#e6e6e6" textLength="46.5" lengthAdjust="spacingAndGlyphs">17 May 06:45</text>
<text x="309.9" y="541.7" font-family="Liberation Sans, sans-serif" font-size="8.1" fill="#e6e6e6" textLength="46.5" lengthAdjust="spacingAndGlyphs">17 May 09:25</text>
<text x="361.6" y="541.7" font-family="Liberation Sans, sans-serif" font-size="8.1" fill="#e6e6e6" textLength="46.5" lengthAdjust="spacingAndGlyphs">17 May 12:05</text>
<text x="413.2" y="541.7" font-family="Liberation Sans, sans-serif" font-size="8.1" fill="#e6e6e6" textLength="46.5" lengthAdjust="spacingAndGlyphs">17 May 14:45</text>
<text x="464.9" y="541.7" font-family="Liberation Sans, sans-serif" font-size="8.1" fill="#e6e6e6" textLength="46.5" lengthAdjust="spacingAndGlyphs">17 May 17:25</text>
<text x="516.6" y="541.7" font-family="Liberation Sans, sans-serif" font-size="8.1" fill="#e6e6e6" textLength="46.5" lengthAdjust="spacingAndGlyphs">17 May 20:05</text>
<text x="568.2" y="541.7" font-family="Liberation Sans, sans-serif" font-size="8.1" fill="#e6e6e6" textLength="46.5" lengthAdjust="spacingAndGlyphs">17 May 22:45</text>
<text x="619.9" y="541.7" font-family="Liberation Sans, sans-serif" font-size="8.1" fill="#e6e6e6" textLength="46.5" lengthAdjust="spacingAndGlyphs">18 May 01:25</text>
<text x="671.5" y="541.7" font-family="Liberation Sans, sans-serif" font-size="8.1" fill="#e6e6e6" textLength="46.5" lengthAdjust="spacingAndGlyphs">18 May 04:05</text>
<text x="723.2" y="541.7" font-family="Liberation Sans, sans-serif" font-size="8.1" fill="#e6e6e6" textLength="46.5" lengthAdjust="spacingAndGlyphs">18 May 06:45</text>
<text x="774.9" y="541.7" font-family="Liberation Sans, sans-serif" font-size="8.1" fill="#e6e6e6" textLength="46.5" lengthAdjust="spacingAndGlyphs">18 May 09:25</text>
<path d="M3.2 89.8H8.8L6 93.4Z" fill="#f4f4f4"/>
<text x="13" y="94.4" font-family="Liberation Sans, sans-serif" font-size="8.1" fill="#e6e6e6" textLength="43.5" lengthAdjust="spacingAndGlyphs">GBPUSD,M5</text>
<text x="62.5" y="94.4" font-family="Liberation Sans, sans-serif" font-size="8.1" fill="#e6e6e6" textLength="113" lengthAdjust="spacingAndGlyphs">1.24459 1.24485 1.24441 1.24471</text>
<text x="5.8" y="120.3" font-family="Liberation Sans, sans-serif" font-size="8.1" fill="#e6e6e6">#123470429 sell 1.00</text>
<text x="5.8" y="146.8" font-family="Liberation Sans, sans-serif" font-size="8.1" fill="#e6e6e6">#123476614 sell 2.00</text>
<text x="5.8" y="167.2" font-family="Liberation Sans, sans-serif" font-size="8.1" fill="#e6e6e6">#123510305 sell 3.00</text>
<text x="928.2" y="95.6" font-family="Liberation Sans, Noto Sans CJK SC, sans-serif" font-size="7.3" fill="#f4f4f4" textLength="43.4" lengthAdjust="spacingAndGlyphs">交易宝精英版</text>
<circle cx="977.8" cy="92.8" r="4.3" fill="none" stroke="#f4f4f4" stroke-width="0.9"/>
<path d="M975.6 94.2Q977.8 96.4 980 94.2" fill="none" stroke="#f4f4f4" stroke-width="0.8"/>
<circle cx="976.3" cy="91.6" r="0.6" fill="#f4f4f4"/><circle cx="979.3" cy="91.6" r="0.6" fill="#f4f4f4"/>
</svg>
<div id="panel" class="a" style="left:17.2px;top:102px;width:242px;height:273.6px;background:#262b33"></div>
<div class="a" style="left:17.2px;top:102px;width:242px;height:21.8px;background:#1c1d1f"></div>
<div class="a" style="left:25.5px;top:113.2px;width:4.6px;height:1.7px;background:#f2f2f2"></div>
<div class="t pt" style="transform:scaleX(1.0202);left:41.2px;top:109px;font-size:10.4px;font-weight:bold;color:#f4f4f4">移</div>
<div class="t pt" style="transform:scaleX(1.0332);left:113.5px;top:109px;font-size:10.4px;font-weight:bold;color:#f4f4f4">交易宝-精英版</div>
<div class="a" style="left:17.2px;top:174.1px;width:64.4px;height:24.5px;background:#f0f0f0;border-radius:2px"></div>
<div class="t pt" style="transform:scaleX(1.0000);left:27.4px;top:133.6px;font-size:10.5px;font-weight:bold;color:#f4f4f4">订单下单</div>
<div class="t pt" style="transform:scaleX(1.0000);left:27.4px;top:157.9px;font-size:10.5px;font-weight:bold;color:#f4f4f4">订单平仓</div>
<div class="t pt" style="transform:scaleX(1.0000);left:27.4px;top:182.2px;font-size:10.5px;font-weight:bold;color:#2c2f36">订单修改</div>
<div class="t pt" style="transform:scaleX(1.0000);left:27.4px;top:206.5px;font-size:10.5px;font-weight:bold;color:#f4f4f4">挂单功能</div>
<div class="t pt" style="transform:scaleX(1.0000);left:27.4px;top:230.8px;font-size:10.5px;font-weight:bold;color:#f4f4f4">网址导航</div>
<div class="t pt" style="transform:scaleX(1.0000);left:27.4px;top:255.1px;font-size:10.5px;font-weight:bold;color:#f4f4f4">联系我们</div>
<div class="t pt" style="transform:scaleX(1.0000);left:97.4px;top:133.2px;font-size:10.5px;font-weight:bold;color:#f4f4f4">订单模式</div>
<div class="a" style="left:154px;top:130.3px;width:89.1px;height:15.6px;background:#dfe6f0;border-radius:1.5px"></div>
<div class="t pt" style="transform:scaleX(0.9952);left:168.6px;top:134.4px;font-size:9.8px;font-weight:bold;color:#20242b">订单汇总计算</div>
<div class="t pt" style="transform:scaleX(1.0000);left:97.4px;top:157.2px;font-size:10.5px;font-weight:bold;color:#f4f4f4">订单盈利大于</div>
<div class="a" style="left:166px;top:154.1px;width:40.6px;height:16.2px;background:#f0f0f0;border-radius:2px"></div>
<div class="t pt" style="transform:scaleX(1.0312);left:178.2px;top:157.9px;font-size:9.3px;font-weight:bold;color:#20242b">100</div>
<div class="t pt" style="transform:scaleX(1.0000);left:212.2px;top:157.2px;font-size:10.5px;font-weight:bold;color:#f4f4f4">点保平</div>
<div class="a" style="left:97.2px;top:178px;width:145.6px;height:16.2px;background:#f05b5b;border-radius:2px"></div>
<div class="t pt" style="transform:scaleX(1.0284);left:137.3px;top:181.6px;font-size:9.6px;font-weight:bold;color:#fbeeee;word-spacing:2px">盈利保平 停用</div>
<div class="t pt" style="transform:scaleX(1.0047);left:97.4px;top:205px;font-size:8.9px;font-weight:bold;color:#f4f4f4">价格距离止损</div>
<div class="a" style="left:154px;top:202.2px;width:24.2px;height:14.8px;background:#f0f0f0;border-radius:2px"></div>
<div class="t pt" style="transform:scaleX(1.0000);left:158.6px;top:205.6px;font-size:8.7px;font-weight:bold;color:#20242b">200</div>
<div class="t pt" style="transform:scaleX(0.9915);left:180px;top:205px;font-size:8.9px;font-weight:bold;color:#f4f4f4">点移动</div>
<div class="a" style="left:210px;top:202.2px;width:24.7px;height:14.8px;background:#f0f0f0;border-radius:2px"></div>
<div class="t pt" style="transform:scaleX(1.0132);left:217.4px;top:205.6px;font-size:8.7px;font-weight:bold;color:#20242b">50</div>
<div class="t pt" style="transform:scaleX(0.9690);left:235.8px;top:205px;font-size:8.9px;font-weight:bold;color:#f4f4f4">点</div>
<div class="a" style="left:97.2px;top:222.8px;width:145.6px;height:15.8px;background:#f05b5b;border-radius:2px"></div>
<div class="t pt" style="transform:scaleX(1.0284);left:137.3px;top:226.2px;font-size:9.6px;font-weight:bold;color:#fbeeee;word-spacing:2px">移动止损 停用</div>
<div class="t pt" style="transform:scaleX(1.0856);left:97.4px;top:245px;font-size:8.7px;font-weight:bold;color:#74dba4">GBPUSD多单平均价格: 0.00000</div>
<div class="t pt" style="transform:scaleX(1.0856);left:97.4px;top:265.9px;font-size:8.7px;font-weight:bold;color:#f06363">GBPUSD空单平均价格: 1.24800</div>
<div class="a" style="left:97.3px;top:287px;width:68.8px;height:24.6px;background:#e74c4c;border-radius:2px"></div>
<div class="t pt" style="transform:scaleX(1.0000);left:121px;top:295px;font-size:10.5px;font-weight:bold;color:#fbeeee">空单</div>
<div class="a" style="left:174.2px;top:287px;width:68.6px;height:24.6px;background:#17181a;border-radius:2px"></div>
<div class="t pt" style="transform:scaleX(1.0000);left:187.4px;top:295px;font-size:10.5px;font-weight:bold;color:#f4f4f4">直接设置</div>
<div class="t pt" style="transform:scaleX(0.9995);left:97.6px;top:322.6px;font-size:8.8px;font-weight:bold;color:#f4f4f4">止损</div>
<div class="t pt" style="left:121px;top:323.2px;font-size:7.6px;font-weight:bold;color:#aeb3ba">+</div>
<div class="a" style="left:129.8px;top:319.3px;width:28.2px;height:14.8px;background:#f0f0f0;border-radius:2px"></div>
<div class="t pt" style="left:141.4px;top:322.9px;font-size:8.7px;font-weight:bold;color:#20242b">0</div>
<div class="t pt" style="left:162.2px;top:323.2px;font-size:7.6px;font-weight:bold;color:#aeb3ba">-</div>
<div class="t pt" style="transform:scaleX(0.9995);left:174.5px;top:322.6px;font-size:8.8px;font-weight:bold;color:#f4f4f4">止盈</div>
<div class="t pt" style="left:197.5px;top:323.2px;font-size:7.6px;font-weight:bold;color:#aeb3ba">+</div>
<div class="a" style="left:206px;top:319.3px;width:28.7px;height:14.8px;background:#f0f0f0;border-radius:2px"></div>
<div class="t pt" style="left:217.9px;top:322.9px;font-size:8.7px;font-weight:bold;color:#20242b">0</div>
<div class="t pt" style="left:238.8px;top:323.2px;font-size:7.6px;font-weight:bold;color:#aeb3ba">-</div>
<div class="a" style="left:97.3px;top:339.5px;width:145.5px;height:16.5px;background:#2d8cf0;border-radius:2px"></div>
<div class="t pt" style="transform:scaleX(1.0033);left:150.6px;top:343.2px;font-size:9.6px;font-weight:bold;color:#eef5fd">修改订单</div>
<div class="a" style="left:0;top:549px;width:1024px;height:19px;background:#f0f0f0"></div>
<div class="a" style="left:0;top:549px;width:1024px;height:1px;background:#fafafa"></div>
<div class="a" style="left:298px;top:549px;width:74.6px;height:17px;background:#fff;border:1.4px solid #111;border-top:none"></div>
<div class="t" style="transform:scaleX(0.9243);left:10.5px;top:555px;font-size:10.4px;color:#8a8a8a">USDCAD,H1</div>
<div class="t" style="transform:scaleX(0.9346);left:83.8px;top:555px;font-size:10.4px;color:#8a8a8a">USDCHF,H1</div>
<div class="t" style="transform:scaleX(0.9417);left:154.9px;top:555px;font-size:10.4px;color:#8a8a8a">AUDCHF,M5</div>
<div class="t" style="transform:scaleX(0.9313);left:230.2px;top:555px;font-size:10.4px;color:#8a8a8a">USDCAD,M5</div>
<div class="t" style="transform:scaleX(0.9395);left:306.6px;top:555px;font-size:10.4px;color:#111">GBPUSD,M5</div>
<div class="t" style="transform:scaleX(0.9313);left:380.5px;top:555px;font-size:10.4px;color:#8a8a8a">EURUSD,M5</div>
<div class="t" style="transform:scaleX(0.9353);left:455.4px;top:555px;font-size:10.4px;color:#8a8a8a">USDJPY,M5</div>
<div class="t" style="transform:scaleX(0.9624);left:526.5px;top:555px;font-size:10.4px;color:#8a8a8a">AUDUSD,M5</div>
<div class="sep" style="left:75.6px;top:552.5px;height:11.5px;background:#9a9a9a"></div>
<div class="sep" style="left:146.8px;top:552.5px;height:11.5px;background:#9a9a9a"></div>
<div class="sep" style="left:221.6px;top:552.5px;height:11.5px;background:#9a9a9a"></div>
<div class="sep" style="left:446.6px;top:552.5px;height:11.5px;background:#9a9a9a"></div>
<div class="sep" style="left:517.6px;top:552.5px;height:11.5px;background:#9a9a9a"></div>
<div class="sep" style="left:595px;top:552.5px;height:11.5px;background:#9a9a9a"></div>
<svg class="a" style="left:995px;top:552px" width="26" height="11" viewBox="995 552 26 11"><path d="M1002.2 555L999.6 557.4L1002.2 559.8Z M1014.4 555L1017 557.4L1014.4 559.8Z" fill="#b0b0b0"/></svg>
<div class="a" style="left:0;top:567px;width:1024px;height:1px;background:#d6d6d6"></div>
<div class="a" style="left:0;top:568px;width:1024px;height:137px;background:#f0f0f0"></div>
<div class="a" style="left:0;top:581px;width:8.6px;height:103px;background:linear-gradient(90deg,#dfe8f3,#c9d8ea)"></div>
<svg class="a" style="left:0;top:568px" width="10" height="10" viewBox="0 568 10 10"><path d="M0.2 572.2L3.6 575.8M3.6 572.2L0.2 575.8" stroke="#333" stroke-width="1.2"/></svg>
<div class="a" style="left:0;top:683px;width:9.4px;height:20px;overflow:hidden"><div class="t" style="left:-1.6px;top:19.6px;font-size:9.6px;color:#333;transform-origin:0 0;transform:rotate(-90deg)">终端</div></div>
<div class="a" style="left:9.7px;top:569.2px;width:1014.3px;height:114.4px;background:#fff"></div>
<div class="a" style="left:9.7px;top:569.2px;width:997.8px;height:20.2px;background:#fff;border-bottom:1px solid #e6e6e6"></div>
<div class="a" style="left:9.7px;top:589.60px;width:997.8px;height:16.88px;background:#0078d7"></div>
<div class="a" style="left:9.7px;top:606.48px;width:997.8px;height:16.88px;background:#ededed"></div>
<div class="a" style="left:9.7px;top:623.36px;width:997.8px;height:16.88px;background:#ffffff"></div>
<div class="a" style="left:9.7px;top:640.24px;width:997.8px;height:16.88px;background:#ededed"></div>
<div class="a" style="left:9.7px;top:657.12px;width:997.8px;height:16.88px;background:#ffffff"></div>
<div class="a" style="left:9.7px;top:674.00px;width:997.8px;height:9.40px;background:#ededed"></div>
<div class="a" style="left:9.7px;top:605.98px;width:997.8px;height:1px;background:#e2e2e2"></div>
<div class="a" style="left:9.7px;top:622.86px;width:997.8px;height:1px;background:#e2e2e2"></div>
<div class="a" style="left:9.7px;top:639.74px;width:997.8px;height:1px;background:#e2e2e2"></div>
<div class="a" style="left:9.7px;top:656.62px;width:997.8px;height:1px;background:#e2e2e2"></div>
<div class="a" style="left:9.7px;top:673.50px;width:997.8px;height:1px;background:#e2e2e2"></div>
<div class="a" style="left:88.4px;top:569.2px;width:1px;height:114.2px;background:#e3e3e3"></div>
<div class="a" style="left:88.4px;top:589.6px;width:1px;height:16.88px;background:#5aa6e6"></div>
<div class="a" style="left:199.3px;top:569.2px;width:1px;height:114.2px;background:#e3e3e3"></div>
<div class="a" style="left:199.3px;top:589.6px;width:1px;height:16.88px;background:#5aa6e6"></div>
<div class="a" style="left:255.2px;top:569.2px;width:1px;height:114.2px;background:#e3e3e3"></div>
<div class="a" style="left:255.2px;top:589.6px;width:1px;height:16.88px;background:#5aa6e6"></div>
<div class="a" style="left:297.5px;top:569.2px;width:1px;height:114.2px;background:#e3e3e3"></div>
<div class="a" style="left:297.5px;top:589.6px;width:1px;height:16.88px;background:#5aa6e6"></div>
<div class="a" style="left:353.5px;top:569.2px;width:1px;height:114.2px;background:#e3e3e3"></div>
<div class="a" style="left:353.5px;top:589.6px;width:1px;height:16.88px;background:#5aa6e6"></div>
<div class="a" style="left:414.4px;top:569.2px;width:1px;height:114.2px;background:#e3e3e3"></div>
<div class="a" style="left:414.4px;top:589.6px;width:1px;height:16.88px;background:#5aa6e6"></div>
<div class="a" style="left:475.7px;top:569.2px;width:1px;height:114.2px;background:#e3e3e3"></div>
<div class="a" style="left:475.7px;top:589.6px;width:1px;height:16.88px;background:#5aa6e6"></div>
<div class="a" style="left:537.1px;top:569.2px;width:1px;height:114.2px;background:#e3e3e3"></div>
<div class="a" style="left:537.1px;top:589.6px;width:1px;height:16.88px;background:#5aa6e6"></div>
<div class="a" style="left:598.3px;top:569.2px;width:1px;height:114.2px;background:#e3e3e3"></div>
<div class="a" style="left:598.3px;top:589.6px;width:1px;height:16.88px;background:#5aa6e6"></div>
<div class="a" style="left:659.0px;top:569.2px;width:1px;height:114.2px;background:#e3e3e3"></div>
<div class="a" style="left:659.0px;top:589.6px;width:1px;height:16.88px;background:#5aa6e6"></div>
<div class="a" style="left:721.2px;top:569.2px;width:1px;height:114.2px;background:#e3e3e3"></div>
<div class="a" style="left:721.2px;top:589.6px;width:1px;height:16.88px;background:#5aa6e6"></div>
<div class="a" style="left:813.1px;top:569.2px;width:1px;height:114.2px;background:#e3e3e3"></div>
<div class="a" style="left:813.1px;top:589.6px;width:1px;height:16.88px;background:#5aa6e6"></div>
<div class="t hd" style="left:14.8px;top:575.2px;font-size:10px;color:#1a1a1a">订单</div>
<div class="t hd" style="right:827.5px;top:575.2px;font-size:10px;color:#1a1a1a;transform-origin:100% 50%">时间</div>
<div class="t hd" style="right:772.4px;top:575.2px;font-size:10px;color:#1a1a1a;transform-origin:100% 50%">类型</div>
<div class="t hd" style="right:729.4px;top:575.2px;font-size:10px;color:#1a1a1a;transform-origin:100% 50%">手数</div>
<div class="t hd" style="left:307px;top:575.2px;font-size:10px;color:#1a1a1a">交易...</div>
<div class="t hd" style="right:612.8px;top:575.2px;font-size:10px;color:#1a1a1a;transform-origin:100% 50%">价格</div>
<div class="t hd" style="right:551.5px;top:575.2px;font-size:10px;color:#1a1a1a;transform-origin:100% 50%">止损</div>
<div class="t hd" style="right:490.20000000000005px;top:575.2px;font-size:10px;color:#1a1a1a;transform-origin:100% 50%">止盈</div>
<div class="t hd" style="right:429px;top:575.2px;font-size:10px;color:#1a1a1a;transform-origin:100% 50%">价格</div>
<div class="t hd" style="right:367.70000000000005px;top:575.2px;font-size:10px;color:#1a1a1a;transform-origin:100% 50%">手续费</div>
<div class="t hd" style="right:306.29999999999995px;top:575.2px;font-size:10px;color:#1a1a1a;transform-origin:100% 50%">库存费</div>
<div class="t hd" style="right:213.5px;top:575.2px;font-size:10px;color:#1a1a1a;transform-origin:100% 50%">获利</div>
<div class="t hd" style="right:20.799999999999955px;top:575.2px;font-size:10px;color:#1a1a1a;transform-origin:100% 50%">注释</div>
<svg class="a" style="left:341px;top:575px" width="8" height="9" viewBox="0 0 8 9"><path d="M2.4 6.6L5.2 3" stroke="#666" stroke-width="0.9"/></svg>
<svg class="a" style="left:12px;top:591.50px" width="12" height="13" viewBox="0 0 12 13"><path d="M1.3 1.2H7L9.4 3.6V11.2H1.3Z" fill="#fdfdfd" stroke="#6f6f6f" stroke-width="0.9"/><path d="M7 1.2V3.6H9.4" fill="none" stroke="#6f6f6f" stroke-width="0.8"/><circle cx="8.6" cy="9.9" r="2.5" fill="#e5412d" stroke="#fbe0da" stroke-width="0.5"/></svg>
<div class="t rw" style="left:27.8px;top:594.00px;font-size:10px;color:#fff">123470481</div>
<div class="t rw" style="right:826.6px;top:594.00px;font-size:10px;color:#fff;transform-origin:100% 50%">2022.05.17 18:21:56</div>
<div class="t rw" style="right:770.8px;top:594.00px;font-size:10px;color:#fff;transform-origin:100% 50%">sell</div>
<div class="t rw" style="right:727.6px;top:594.00px;font-size:10px;color:#fff;transform-origin:100% 50%">1.00</div>
<div class="t rw" style="right:672.4px;top:594.00px;font-size:10px;color:#fff;transform-origin:100% 50%">eurusd</div>
<div class="t rw" style="right:611.6px;top:594.00px;font-size:10px;color:#fff;transform-origin:100% 50%">1.05292</div>
<div class="t rw" style="right:549.8px;top:594.00px;font-size:10px;color:#fff;transform-origin:100% 50%">0.00000</div>
<div class="t rw" style="right:488.79999999999995px;top:594.00px;font-size:10px;color:#fff;transform-origin:100% 50%">0.00000</div>
<div class="t rw" style="right:427.6px;top:594.00px;font-size:10px;color:#fff;transform-origin:100% 50%">1.05222</div>
<div class="t rw" style="right:366.20000000000005px;top:594.00px;font-size:10px;color:#fff;transform-origin:100% 50%">0.00</div>
<div class="t rw" style="right:305.20000000000005px;top:594.00px;font-size:10px;color:#fff;transform-origin:100% 50%">1.31</div>
<div class="t rw" style="right:229px;top:594.00px;font-size:10px;color:#fff;transform-origin:100% 50%">70.00</div>
<div class="t" style="left:802.2px;top:591.80px;font-size:13.5px;color:#d6e6f7">×</div>
<svg class="a" style="left:12px;top:608.38px" width="12" height="13" viewBox="0 0 12 13"><path d="M1.3 1.2H7L9.4 3.6V11.2H1.3Z" fill="#fdfdfd" stroke="#6f6f6f" stroke-width="0.9"/><path d="M7 1.2V3.6H9.4" fill="none" stroke="#6f6f6f" stroke-width="0.8"/><circle cx="8.6" cy="9.9" r="2.5" fill="#e5412d" stroke="#fbe0da" stroke-width="0.5"/></svg>
<div class="t rw" style="left:27.8px;top:611.00px;font-size:10px;color:#1a1a1a">123470429</div>
<div class="t rw" style="right:826.6px;top:611.00px;font-size:10px;color:#1a1a1a;transform-origin:100% 50%">2022.05.17 18:21:39</div>
<div class="t rw" style="right:770.8px;top:611.00px;font-size:10px;color:#1a1a1a;transform-origin:100% 50%">sell</div>
<div class="t rw" style="right:727.6px;top:611.00px;font-size:10px;color:#1a1a1a;transform-origin:100% 50%">1.00</div>
<div class="t rw" style="right:672.4px;top:611.00px;font-size:10px;color:#1a1a1a;transform-origin:100% 50%">gbpusd</div>
<div class="t rw" style="right:611.6px;top:611.00px;font-size:10px;color:#1a1a1a;transform-origin:100% 50%">1.24603</div>
<div class="t rw" style="right:549.8px;top:611.00px;font-size:10px;color:#1a1a1a;transform-origin:100% 50%">0.00000</div>
<div class="t rw" style="right:488.79999999999995px;top:611.00px;font-size:10px;color:#1a1a1a;transform-origin:100% 50%">0.00000</div>
<div class="t rw" style="right:427.6px;top:611.00px;font-size:10px;color:#1a1a1a;transform-origin:100% 50%">1.24493</div>
<div class="t rw" style="right:366.20000000000005px;top:611.00px;font-size:10px;color:#1a1a1a;transform-origin:100% 50%">0.00</div>
<div class="t rw" style="right:305.20000000000005px;top:611.00px;font-size:10px;color:#1a1a1a;transform-origin:100% 50%">-3.63</div>
<div class="t rw" style="right:229px;top:611.00px;font-size:10px;color:#1a1a1a;transform-origin:100% 50%">110.00</div>
<div class="t" style="left:802.2px;top:608.80px;font-size:13.5px;color:#8a8a8a">×</div>
<svg class="a" style="left:12px;top:625.26px" width="12" height="13" viewBox="0 0 12 13"><path d="M1.3 1.2H7L9.4 3.6V11.2H1.3Z" fill="#fdfdfd" stroke="#6f6f6f" stroke-width="0.9"/><path d="M7 1.2V3.6H9.4" fill="none" stroke="#6f6f6f" stroke-width="0.8"/><circle cx="8.6" cy="9.9" r="2.5" fill="#e5412d" stroke="#fbe0da" stroke-width="0.5"/></svg>
<div class="t rw" style="left:27.8px;top:628.00px;font-size:10px;color:#1a1a1a">123476614</div>
<div class="t rw" style="right:826.6px;top:628.00px;font-size:10px;color:#1a1a1a;transform-origin:100% 50%">2022.05.17 19:09:58</div>
<div class="t rw" style="right:770.8px;top:628.00px;font-size:10px;color:#1a1a1a;transform-origin:100% 50%">sell</div>
<div class="t rw" style="right:727.6px;top:628.00px;font-size:10px;color:#1a1a1a;transform-origin:100% 50%">2.00</div>
<div class="t rw" style="right:672.4px;top:628.00px;font-size:10px;color:#1a1a1a;transform-origin:100% 50%">gbpusd</div>
<div class="t rw" style="right:611.6px;top:628.00px;font-size:10px;color:#1a1a1a;transform-origin:100% 50%">1.24737</div>
<div class="t rw" style="right:549.8px;top:628.00px;font-size:10px;color:#1a1a1a;transform-origin:100% 50%">0.00000</div>
<div class="t rw" style="right:488.79999999999995px;top:628.00px;font-size:10px;color:#1a1a1a;transform-origin:100% 50%">0.00000</div>
<div class="t rw" style="right:427.6px;top:628.00px;font-size:10px;color:#1a1a1a;transform-origin:100% 50%">1.24493</div>
<div class="t rw" style="right:366.20000000000005px;top:628.00px;font-size:10px;color:#1a1a1a;transform-origin:100% 50%">0.00</div>
<div class="t rw" style="right:305.20000000000005px;top:628.00px;font-size:10px;color:#1a1a1a;transform-origin:100% 50%">-7.26</div>
<div class="t rw" style="right:229px;top:628.00px;font-size:10px;color:#1a1a1a;transform-origin:100% 50%">488.00</div>
<div class="t" style="left:802.2px;top:625.80px;font-size:13.5px;color:#8a8a8a">×</div>
<svg class="a" style="left:12px;top:642.14px" width="12" height="13" viewBox="0 0 12 13"><path d="M1.3 1.2H7L9.4 3.6V11.2H1.3Z" fill="#fdfdfd" stroke="#6f6f6f" stroke-width="0.9"/><path d="M7 1.2V3.6H9.4" fill="none" stroke="#6f6f6f" stroke-width="0.8"/><circle cx="8.6" cy="9.9" r="2.5" fill="#e5412d" stroke="#fbe0da" stroke-width="0.5"/></svg>
<div class="t rw" style="left:27.8px;top:645.00px;font-size:10px;color:#1a1a1a">123510305</div>
<div class="t rw" style="right:826.6px;top:645.00px;font-size:10px;color:#1a1a1a;transform-origin:100% 50%">2022.05.18 03:37:11</div>
<div class="t rw" style="right:770.8px;top:645.00px;font-size:10px;color:#1a1a1a;transform-origin:100% 50%">sell</div>
<div class="t rw" style="right:727.6px;top:645.00px;font-size:10px;color:#1a1a1a;transform-origin:100% 50%">3.00</div>
<div class="t rw" style="right:672.4px;top:645.00px;font-size:10px;color:#1a1a1a;transform-origin:100% 50%">gbpusd</div>
<div class="t rw" style="right:611.6px;top:645.00px;font-size:10px;color:#1a1a1a;transform-origin:100% 50%">1.24907</div>
<div class="t rw" style="right:549.8px;top:645.00px;font-size:10px;color:#1a1a1a;transform-origin:100% 50%">0.00000</div>
<div class="t rw" style="right:488.79999999999995px;top:645.00px;font-size:10px;color:#1a1a1a;transform-origin:100% 50%">0.00000</div>
<div class="t rw" style="right:427.6px;top:645.00px;font-size:10px;color:#1a1a1a;transform-origin:100% 50%">1.24493</div>
<div class="t rw" style="right:366.20000000000005px;top:645.00px;font-size:10px;color:#1a1a1a;transform-origin:100% 50%">0.00</div>
<div class="t rw" style="right:305.20000000000005px;top:645.00px;font-size:10px;color:#1a1a1a;transform-origin:100% 50%">0.00</div>
<div class="t rw" style="right:229px;top:645.00px;font-size:10px;color:#1a1a1a;transform-origin:100% 50%">1 242.00</div>
<div class="t" style="left:802.2px;top:642.80px;font-size:13.5px;color:#8a8a8a">×</div>
<svg class="a" style="left:12px;top:659.02px" width="12" height="13" viewBox="0 0 12 13"><path d="M1.3 1.2H7L9.4 3.6V11.2H1.3Z" fill="#fdfdfd" stroke="#6f6f6f" stroke-width="0.9"/><path d="M7 1.2V3.6H9.4" fill="none" stroke="#6f6f6f" stroke-width="0.8"/><circle cx="8.6" cy="9.9" r="2.5" fill="#e5412d" stroke="#fbe0da" stroke-width="0.5"/></svg>
<div class="t rw" style="left:27.8px;top:662.00px;font-size:10px;color:#1a1a1a">123470183</div>
<div class="t rw" style="right:826.6px;top:662.00px;font-size:10px;color:#1a1a1a;transform-origin:100% 50%">2022.05.17 18:20:12</div>
<div class="t rw" style="right:770.8px;top:662.00px;font-size:10px;color:#1a1a1a;transform-origin:100% 50%">sell</div>
<div class="t rw" style="right:727.6px;top:662.00px;font-size:10px;color:#1a1a1a;transform-origin:100% 50%">1.00</div>
<div class="t rw" style="right:672.4px;top:662.00px;font-size:10px;color:#1a1a1a;transform-origin:100% 50%">usdcad</div>
<div class="t rw" style="right:611.6px;top:662.00px;font-size:10px;color:#1a1a1a;transform-origin:100% 50%">1.28428</div>
<div class="t rw" style="right:549.8px;top:662.00px;font-size:10px;color:#1a1a1a;transform-origin:100% 50%">0.00000</div>
<div class="t rw" style="right:488.79999999999995px;top:662.00px;font-size:10px;color:#1a1a1a;transform-origin:100% 50%">0.00000</div>
<div class="t rw" style="right:427.6px;top:662.00px;font-size:10px;color:#1a1a1a;transform-origin:100% 50%">1.28263</div>
<div class="t rw" style="right:366.20000000000005px;top:662.00px;font-size:10px;color:#1a1a1a;transform-origin:100% 50%">0.00</div>
<div class="t rw" style="right:305.20000000000005px;top:662.00px;font-size:10px;color:#1a1a1a;transform-origin:100% 50%">-2.58</div>
<div class="t rw" style="right:229px;top:662.00px;font-size:10px;color:#1a1a1a;transform-origin:100% 50%">128.64</div>
<div class="t" style="left:802.2px;top:659.80px;font-size:13.5px;color:#8a8a8a">×</div>
<div class="a" style="left:9.7px;top:674.00px;width:997.8px;height:9.40px;overflow:hidden">
<svg class="a" style="left:2.3000000000000007px;top:1.90px" width="12" height="13" viewBox="0 0 12 13"><path d="M1.3 1.2H7L9.4 3.6V11.2H1.3Z" fill="#fdfdfd" stroke="#6f6f6f" stroke-width="0.9"/><path d="M7 1.2V3.6H9.4" fill="none" stroke="#6f6f6f" stroke-width="0.8"/><circle cx="8.6" cy="9.9" r="2.5" fill="#e5412d" stroke="#fbe0da" stroke-width="0.5"/></svg>
<div class="t rw" style="left:18.1px;top:4.00px;font-size:10px;color:#1a1a1a">123470654</div>
<div class="t rw" style="right:810.1px;top:4.00px;font-size:10px;color:#1a1a1a;transform-origin:100% 50%">2022.05.17 18:24:00</div>
<div class="t rw" style="right:754.3px;top:4.00px;font-size:10px;color:#1a1a1a;transform-origin:100% 50%">buy</div>
<div class="t rw" style="right:711.1px;top:4.00px;font-size:10px;color:#1a1a1a;transform-origin:100% 50%">1.00</div>
<div class="t rw" style="right:655.9px;top:4.00px;font-size:10px;color:#1a1a1a;transform-origin:100% 50%">usdjpy</div>
<div class="t rw" style="right:595.1px;top:4.00px;font-size:10px;color:#1a1a1a;transform-origin:100% 50%">129.351</div>
<div class="t rw" style="right:533.3px;top:4.00px;font-size:10px;color:#1a1a1a;transform-origin:100% 50%">0.000</div>
<div class="t rw" style="right:472.29999999999995px;top:4.00px;font-size:10px;color:#1a1a1a;transform-origin:100% 50%">0.000</div>
<div class="t rw" style="right:411.1px;top:4.00px;font-size:10px;color:#1a1a1a;transform-origin:100% 50%">129.258</div>
<div class="t rw" style="right:349.70000000000005px;top:4.00px;font-size:10px;color:#1a1a1a;transform-origin:100% 50%">0.00</div>
<div class="t rw" style="right:288.70000000000005px;top:4.00px;font-size:10px;color:#1a1a1a;transform-origin:100% 50%">-0.07</div>
<div class="t rw" style="right:212.5px;top:4.00px;font-size:10px;color:#1a1a1a;transform-origin:100% 50%">-71.95</div>
<div class="t" style="left:792.5px;top:2.1px;font-size:13.5px;color:#8a8a8a">×</div>
</div>
<div class="a" style="left:1007.5px;top:569.2px;width:16.5px;height:114.2px;background:#f0f0f0"></div>
<div class="a" style="left:1009.3px;top:604px;width:11.4px;height:46px;background:#cdcdcd"></div>
<svg class="a" style="left:1007px;top:570px" width="17" height="113" viewBox="1007 570 17 113"><path d="M1012 580L1015 577L1018 580M1012 675.6L1015 678.6L1018 675.6" stroke="#555" stroke-width="1.1" fill="none"/></svg>
<div class="a" style="left:9.7px;top:684px;width:1014.3px;height:1px;background:#1a1a1a"></div>
<div class="a" style="left:11.4px;top:683.4px;width:35.2px;height:18.4px;background:#fff;border:1.2px solid #111;border-top:none"></div>
<div class="t" style="transform:scaleX(0.9800);left:19.3px;top:688.6px;font-size:10px;color:#111;font-weight:500">交易</div>
<div class="t" style="transform:scaleX(1.0200);left:54.6px;top:688.6px;font-size:10px;color:#8a8a8a;font-weight:400">展示</div>
<div class="t" style="transform:scaleX(0.9750);left:90px;top:688.6px;font-size:10px;color:#8a8a8a;font-weight:400">账户历史</div>
<div class="t" style="transform:scaleX(0.9900);left:144.7px;top:688.6px;font-size:10px;color:#8a8a8a;font-weight:400">新闻</div>
<div class="t" style="transform:scaleX(0.9900);left:180.3px;top:688.6px;font-size:10px;color:#8a8a8a;font-weight:400">警报</div>
<div class="t" style="transform:scaleX(0.9950);left:215.8px;top:688.6px;font-size:10px;color:#8a8a8a;font-weight:400">邮箱</div>
<div class="t" style="transform:scaleX(0.9400);left:252.2px;top:688.6px;font-size:10px;color:#8a8a8a;font-weight:400">市场</div>
<div class="t" style="transform:scaleX(0.9750);left:303px;top:688.6px;font-size:10px;color:#8a8a8a;font-weight:400">信号</div>
<div class="t" style="transform:scaleX(0.9750);left:338.5px;top:688.6px;font-size:10px;color:#8a8a8a;font-weight:400">文章</div>
<div class="t" style="transform:scaleX(0.9500);left:374px;top:688.6px;font-size:10px;color:#8a8a8a;font-weight:400">代码库</div>
<div class="t" style="transform:scaleX(0.8393);left:419.8px;top:688.6px;font-size:10px;color:#8a8a8a;font-weight:400">EA</div>
<div class="t" style="transform:scaleX(0.9550);left:447.7px;top:688.6px;font-size:10px;color:#8a8a8a;font-weight:400">日志</div>
<div class="t" style="transform:scaleX(1.1667);left:273px;top:692.6px;font-size:7.2px;color:#e8402a;font-weight:bold">120</div>
<div class="sep" style="left:82px;top:687px;height:11.5px;background:#9a9a9a"></div>
<div class="sep" style="left:137px;top:687px;height:11.5px;background:#9a9a9a"></div>
<div class="sep" style="left:172.7px;top:687px;height:11.5px;background:#9a9a9a"></div>
<div class="sep" style="left:208px;top:687px;height:11.5px;background:#9a9a9a"></div>
<div class="sep" style="left:243.8px;top:687px;height:11.5px;background:#9a9a9a"></div>
<div class="sep" style="left:295.4px;top:687px;height:11.5px;background:#9a9a9a"></div>
<div class="sep" style="left:330.7px;top:687px;height:11.5px;background:#9a9a9a"></div>
<div class="sep" style="left:366.2px;top:687px;height:11.5px;background:#9a9a9a"></div>
<div class="sep" style="left:411.4px;top:687px;height:11.5px;background:#9a9a9a"></div>
<div class="sep" style="left:439.8px;top:687px;height:11.5px;background:#9a9a9a"></div>
<div class="sep" style="left:475.6px;top:687px;height:11.5px;background:#9a9a9a"></div>
<div class="a" style="left:0;top:705.2px;width:1024px;height:1px;background:#d2d2d2"></div>
<div class="a" style="left:0;top:706.2px;width:1024px;height:1px;background:#fcfcfc"></div>
<div class="t" style="transform:scaleX(0.9354);left:-1.6px;top:712.3px;font-size:10px;color:#1a1a1a">寻求帮助,请按F1键</div>
<div class="t" style="transform:scaleX(1.0347);left:372.5px;top:711.8px;font-size:10.2px;color:#1a1a1a">Default</div>
<div class="sep" style="left:368.2px;top:708.5px;height:14px;background:#d0d0d0"></div>
<div class="sep" style="left:476.7px;top:708.5px;height:14px;background:#d0d0d0"></div>
<div class="sep" style="left:572px;top:708.5px;height:14px;background:#d0d0d0"></div>
<div class="sep" style="left:637px;top:708.5px;height:14px;background:#d0d0d0"></div>
<div class="sep" style="left:702px;top:708.5px;height:14px;background:#d0d0d0"></div>
<div class="sep" style="left:766px;top:708.5px;height:14px;background:#d0d0d0"></div>
<div class="sep" style="left:830.5px;top:708.5px;height:14px;background:#d0d0d0"></div>
<div class="sep" style="left:893px;top:708.5px;height:14px;background:#d0d0d0"></div>
<svg class="a" style="left:895px;top:709px" width="22" height="15" viewBox="895 709 22 15"><rect x="897.00" y="711" width="1.45" height="8.6" fill="#3c9a3c"/><rect x="897.00" y="719.6" width="1.45" height="2.4" fill="#2a4fa8"/><rect x="899.25" y="711" width="1.45" height="7.7" fill="#3c9a3c"/><rect x="899.25" y="718.7" width="1.45" height="3.3" fill="#2a4fa8"/><rect x="901.50" y="711" width="1.45" height="6.8" fill="#3c9a3c"/><rect x="901.50" y="717.8" width="1.45" height="4.2" fill="#2a4fa8"/><rect x="903.75" y="711" width="1.45" height="5.9" fill="#3c9a3c"/><rect x="903.75" y="716.9" width="1.45" height="5.1" fill="#2a4fa8"/><rect x="906.00" y="711" width="1.45" height="5.0" fill="#3c9a3c"/><rect x="906.00" y="716.0" width="1.45" height="6.0" fill="#2a4fa8"/><rect x="908.25" y="711" width="1.45" height="4.1" fill="#3c9a3c"/><rect x="908.25" y="715.1" width="1.45" height="6.9" fill="#2a4fa8"/><rect x="910.50" y="711" width="1.45" height="3.2" fill="#3c9a3c"/><rect x="910.50" y="714.2" width="1.45" height="7.8" fill="#2a4fa8"/><rect x="912.75" y="711" width="1.45" height="2.3" fill="#3c9a3c"/><rect x="912.75" y="713.3" width="1.45" height="8.7" fill="#2a4fa8"/></svg>
<svg class="a" style="left:1008px;top:710px" width="16" height="16" viewBox="0 0 16 16"><path d="M15.5 4L4 15.5M15.5 8L8 15.5M15.5 12L12 15.5" stroke="#b4b4b4" stroke-width="1.1"/></svg>
<div class="t" style="transform:scaleX(1.0429);left:919.5px;top:711.8px;font-size:10.2px;color:#1a1a1a">23680/15 kb</div>
<div class="a" style="left:0;top:724.5px;width:1024px;height:1.5px;background:#b9b9b9"></div>
</body></html>
